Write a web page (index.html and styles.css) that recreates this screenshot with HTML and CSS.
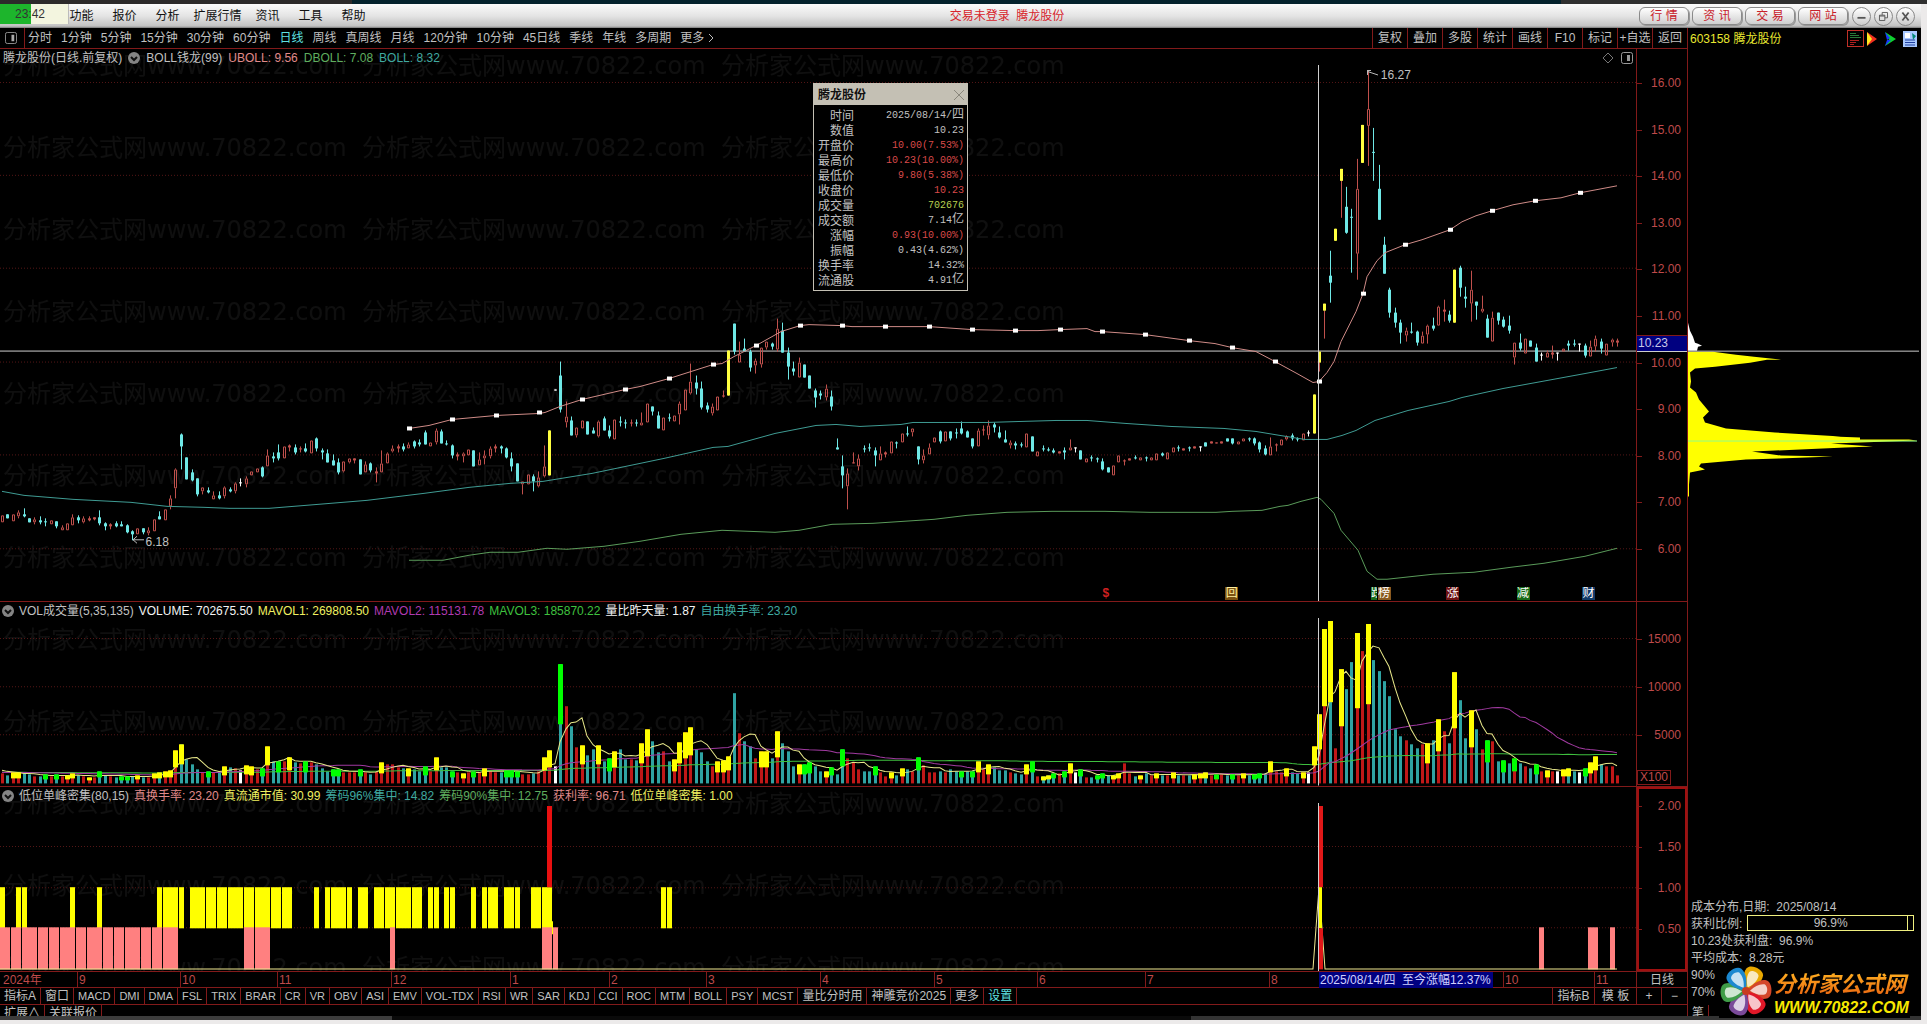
FILE: index.html
```html
<!DOCTYPE html>
<html lang="zh-CN">
<head>
<meta charset="utf-8">
<title>腾龙股份 日线</title>
<link rel="stylesheet" href="styles.css">
</head>
<body>
<div class="desk-strip"></div>
<div class="window">
  <header class="menubar">
    <div class="clock"><span>23:42</span></div>
    <nav class="menus">
      <button>功能</button><button>报价</button><button>分析</button><button class="wide">扩展行情</button><button>资讯</button><button>工具</button><button>帮助</button>
    </nav>
    <div class="status">交易未登录&nbsp; 腾龙股份</div>
    <div class="pills"><button>行 情</button><button>资 讯</button><button>交 易</button><button>网 站</button></div>
    <div class="winctl">
      <button aria-label="最小化"><svg viewBox="0 0 19 19"><path d="M5 11h9" stroke-width="2"/></svg></button>
      <button aria-label="还原"><svg viewBox="0 0 19 19"><path d="M8 8V5h6v6h-3M5 8h6v6H5zM5 9h6" stroke-width="1"/></svg></button>
      <button aria-label="关闭"><svg viewBox="0 0 19 19"><path d="M6 5l7 9M13 5l-7 9" stroke-width="2"/></svg></button>
    </div>
  </header>

  <div class="body">
    <main class="left">
      <div class="toolbar">
        <button class="dock" aria-label="侧栏"><svg viewBox="0 0 13 13"><rect x=".5" y=".5" width="12" height="12" rx="2" fill="none" stroke="#999"/><path d="M7 3h3v7H7z" fill="#aaa"/></svg></button>
        <div class="periods">
          <button>分时</button><button>1分钟</button><button>5分钟</button><button>15分钟</button><button>30分钟</button><button>60分钟</button><button class="on">日线</button><button>周线</button><button>真周线</button><button>月线</button><button>120分钟</button><button>10分钟</button><button>45日线</button><button>季线</button><button>年线</button><button>多周期</button><button class="more">更多<svg viewBox="0 0 6 10"><path d="M1 1l4 4-4 4" fill="none" stroke="#bbb"/></svg></button>
        </div>
        <div class="tools">
          <button>复权</button><button>叠加</button><button>多股</button><button>统计</button><button>画线</button><button>F10</button><button>标记</button><button>+自选</button><button>返回</button>
        </div>
      </div>

      <div class="charts">
        <svg class="watermark" aria-hidden="true"><defs><pattern id="wm" width="359" height="82" patternUnits="userSpaceOnUse"><text x="3" y="25">分析家公式网www.70822.com</text></pattern></defs><rect width="1077" height="100%" fill="url(#wm)"/></svg>

        <section class="panel price">
          <div class="plot">
            <div class="legend">
              <span>腾龙股份(日线.前复权)</span><button class="fold" aria-label="指标菜单"><svg viewBox="0 0 12 12"><circle cx="6" cy="6" r="6"/><path d="M3 5l3 3 3-3"/></svg></button><span>BOLL钱龙(99)</span><span class="pink">UBOLL: 9.56</span><span class="green">DBOLL: 7.08</span><span class="teal">BOLL: 8.32</span>
              <svg class="corner" viewBox="0 0 30 12"><path d="M5 1l5 5-5 5-5-5z" fill="none" stroke="#777"/><rect x="18.500" y=".5" width="11" height="11" rx="2" fill="none" stroke="#999"/><path d="M24 3h3v6h-3z" fill="#999"/></svg>
            </div>
            <svg id="price" class="canvas" viewBox="0 65 1636 537" preserveAspectRatio="none"></svg>
            <span class="mark high">16.27</span>
            <span class="mark low">6.18</span>
            <b class="pin dollar">$</b><b class="pin hui">回</b><b class="pin die">跌</b><b class="pin bang">榜</b><b class="pin zhang">涨</b><b class="pin jian">减</b><b class="pin cai">财</b>
            <div class="popup">
              <div class="popup-head"><b>腾龙股份</b><button aria-label="关闭"><svg viewBox="0 0 12 12"><path d="M1 1l10 10M11 1L1 11" stroke="#8a877c" fill="none"/></svg></button></div>
              <dl>
                <dt>时间</dt><dd>2025/08/14/<i>四</i></dd>
                <dt>数值</dt><dd>10.23</dd>
                <dt>开盘价</dt><dd class="up">10.00(7.53%)</dd>
                <dt>最高价</dt><dd class="up">10.23(10.00%)</dd>
                <dt>最低价</dt><dd class="up">9.80(5.38%)</dd>
                <dt>收盘价</dt><dd class="up">10.23</dd>
                <dt>成交量</dt><dd class="vol">702676</dd>
                <dt>成交额</dt><dd>7.14<i>亿</i></dd>
                <dt>涨幅</dt><dd class="up">0.93(10.00%)</dd>
                <dt>振幅</dt><dd>0.43(4.62%)</dd>
                <dt>换手率</dt><dd>14.32%</dd>
                <dt>流通股</dt><dd>4.91<i>亿</i></dd>
              </dl>
            </div>
          </div>
          <div class="axis"><span>16.00</span><span>15.00</span><span>14.00</span><span>13.00</span><span>12.00</span><span>11.00</span><span>10.00</span><span>9.00</span><span>8.00</span><span>7.00</span><span>6.00</span><em class="cursor">10.23</em></div>
        </section>

        <section class="panel volume">
          <div class="plot">
            <div class="legend tight">
              <button class="fold" aria-label="指标菜单"><svg viewBox="0 0 12 12"><circle cx="6" cy="6" r="6"/><path d="M3 5l3 3 3-3"/></svg></button><span>VOL成交量(5,35,135)</span><span class="white">VOLUME: 702675.50</span><span class="yellow">MAVOL1: 269808.50</span><span class="purple">MAVOL2: 115131.78</span><span class="lime">MAVOL3: 185870.22</span><span class="white">量比昨天量: 1.87</span><span class="teal">自由换手率: 23.20</span>
            </div>
            <svg id="volume" class="canvas" viewBox="0 619 1636 167" preserveAspectRatio="none"></svg>
          </div>
          <div class="axis"><span>15000</span><span>10000</span><span>5000</span><em class="unit">X100</em></div>
        </section>

        <section class="panel signal">
          <div class="plot">
            <div class="legend tight">
              <button class="fold" aria-label="指标菜单"><svg viewBox="0 0 12 12"><circle cx="6" cy="6" r="6"/><path d="M3 5l3 3 3-3"/></svg></button><span>低位单峰密集(80,15)</span><span class="pink">真换手率: 23.20</span><span class="yellow">真流通市值: 30.99</span><span class="teal">筹码96%集中: 14.82</span><span class="green">筹码90%集中: 12.75</span><span class="pink">获利率: 96.71</span><span class="yellow">低位单峰密集: 1.00</span>
            </div>
            <svg id="signal" class="canvas" viewBox="0 803 1636 168" preserveAspectRatio="none"></svg>
          </div>
          <div class="axis"><span>2.00</span><span>1.50</span><span>1.00</span><span>0.50</span></div>
        </section>
      </div>

      <div class="dates">
        <div class="months"><span>2024年</span><span>9</span><span>10</span><span>11</span><span>12</span><span>1</span><span>2</span><span>3</span><span>4</span><span>5</span><span>6</span><span>7</span><span>8</span><span class="now">2025/08/14/四&nbsp; 至今涨幅12.37%</span><span class="gap"></span><span>10</span><span>11</span></div>
        <div class="period">日线</div>
      </div>

      <div class="tabs">
        <button class="cn">指标A</button><button class="cn">窗口</button><button>MACD</button><button>DMI</button><button>DMA</button><button>FSL</button><button>TRIX</button><button>BRAR</button><button>CR</button><button>VR</button><button>OBV</button><button>ASI</button><button>EMV</button><button>VOL-TDX</button><button>RSI</button><button>WR</button><button>SAR</button><button>KDJ</button><button>CCI</button><button>ROC</button><button>MTM</button><button>BOLL</button><button>PSY</button><button>MCST</button><button class="cn">量比分时用</button><button class="cn">神雕竞价2025</button><button class="cn">更多</button><button class="cn on">设置</button>
        <div class="tabs-end"><button>指标B</button><button>模 板</button><button class="zoom">+</button><button class="zoom">−</button></div>
      </div>
      <div class="extra"><button>扩展∧</button><button>关联报价</button></div>
    </main>

    <aside class="side">
      <div class="stock"><span>603158 腾龙股份</span>
        <svg viewBox="0 0 72 18"><rect x=".5" y=".5" width="16" height="16" fill="none" stroke="#c03028"/><path d="M3 3.500h6M3 5.500h9M3 7.500h11" stroke="#287838"/><path d="M3 10.500h9M3 12.500h6M3 14.500h4" stroke="#b02020"/><path d="M20 2l10 7-10 7 3-7z" fill="#f03020"/><path d="M20 2l5 7-5 7z" fill="#ffe820"/><path d="M38 2l11 7-11 7 4-7z" fill="#10d030"/><path d="M38 2l5 6-3 2z" fill="#1838ff"/><path d="M40 10l4 0-6 6z" fill="#1838ff"/><rect x="56" y="1" width="14" height="16" fill="#a8c8ff"/><path d="M58 3h5v5h-5z" fill="#fff"/><path d="M65 3l4 3-3 4z" fill="#087"/><path d="M58 10h10M58 12.500h10M58 15h10" stroke="#2040a0"/></svg>
      </div>
      <svg class="chips" viewBox="1688 49 233 849" preserveAspectRatio="none">
        <path fill="#fff" d="M1688 323L1690 331L1693 337L1695 343L1698 344L1702 346L1698 347L1697 351H1688z"/>
        <path fill="#ff0" d="M1688 352H1713L1736 355L1754 357L1781 360H1767L1750 363L1715 367L1695 369L1690 373L1691 382L1690 388L1696 393L1699 400L1709 412L1703 418L1705 423L1726 429L1775 433L1841 437H1833L1860 438V440H1909L1917 441L1860 443L1831 444L1873 447L1845 448L1775 451L1752 452L1781 456L1833 457L1779 459L1746 460L1701 464L1699 467L1705 470L1690 473L1689 485V497H1688z"/>
        <path d="M1688 441.500H1917" stroke="#8dff8d"/>
        <path d="M1688 351.500H1919" stroke="#ccc"/>
      </svg>
      <div class="info">
        <p>成本分布,日期: &nbsp;2025/08/14</p>
        <p class="ratio">获利比例: <span>96.9%</span></p>
        <p>10.23处获利盘: &nbsp;96.9%</p>
        <p>平均成本: &nbsp;8.28元</p>
        <p>90%</p>
        <p>70%</p>
        <div class="brand">
          <svg viewBox="-27 -27 54 54">
            <defs>
              <path id="petal" d="M0 0C-6 -7 -11 -14 -9 -21C-7 -27 7 -27 9 -21C11 -14 6 -7 0 0z"/>
              <path id="inner" d="M0 -4C-4 -9 -6 -14 -5 -19C-3 -22 3 -22 5 -19C6 -14 4 -9 0 -4z" fill="#fff" opacity=".75"/>
            </defs>
            <g transform="rotate(25)"><use href="#petal" fill="#e8a800"/><use href="#inner"/></g>
            <g transform="rotate(85)"><use href="#petal" fill="#d4472a"/><use href="#inner"/></g>
            <g transform="rotate(145)"><use href="#petal" fill="#e01828"/><use href="#inner"/></g>
            <g transform="rotate(205)"><use href="#petal" fill="#7a4a9a"/><use href="#inner"/></g>
            <g transform="rotate(265)"><use href="#petal" fill="#3f9c48"/><use href="#inner"/></g>
            <g transform="rotate(325)"><use href="#petal" fill="#1c88d0"/><use href="#inner"/></g>
            <circle r="4" fill="#c83c20"/>
          </svg>
          <div><strong>分析家公式网</strong><a href="#home">WWW.70822.COM</a></div>
        </div>
      </div>
      <div class="extra"><button>笔</button></div>
    </aside>
  </div>
  <div class="scroll"></div>
</div>
<script src="chart.js"></script>
</body>
</html>
```

FILE: styles.css
```css
* { box-sizing: border-box; }
html, body { margin: 0; height: 100%; }
body {
  display: flex; flex-direction: column;
  background: #eceaea; color: #c0c0c0;
  font: 12px/16px "Liberation Sans", "Noto Sans CJK SC", sans-serif;
  overflow: hidden;
}
button { margin: 0; padding: 0; border: 0; background: none; color: inherit; font: inherit; white-space: nowrap; }
svg { display: block; }
p, dl, dd, dt { margin: 0; }

.desk-strip { height: 4px; background: linear-gradient(90deg, #2c2a2a 352px, #04222c 352px, #04222c 81%, #303030 81%); }
.window { flex: 1; min-height: 0; margin: 0 6px 4px 0; display: flex; flex-direction: column; background: #000; }

/* menu bar */
.menubar { display: flex; align-items: center; height: 24px; background: linear-gradient(#fbfbfb, #e4e4e4 50%, #c2c2c2 92%, #777); color: #111; }
.clock { width: 69px; height: 20px; align-self: flex-start; padding-left: 15px; line-height: 20px; background: linear-gradient(90deg, #1db52c 31px, #f3f5df 31px); color: #333; border-right: 1px solid #bbb; }
.menus { display: flex; margin-left: -9px; }
.menus button { width: 43px; }
.menus .wide { width: 57px; }
.status { margin: 0 auto; color: #d8242c; }
.pills { display: flex; gap: 3px; }
.pills button { width: 50px; height: 18px; border: 1px solid #8a8a8a; border-radius: 6px; background: linear-gradient(#fff, #cfcfcf); box-shadow: 1px 1px 0 #999; color: #c8202a; line-height: 15px; }
.winctl { display: flex; gap: 3px; margin: 0 6px 0 4px; }
.winctl button { width: 19px; height: 19px; border: 1px solid #888; border-radius: 50%; background: linear-gradient(#fff, #ccc); }
.winctl svg { width: 17px; height: 17px; fill: none; stroke: #555; }

.body { flex: 1; min-height: 0; display: flex; }
.left { flex: 1; min-width: 0; display: flex; flex-direction: column; border-right: 1px solid #821a1a; }

/* period toolbar */
.toolbar { display: flex; height: 21px; border-bottom: 1px solid #821a1a; line-height: 20px; }
.dock { width: 25px; padding-left: 5px; border-right: 1px solid #821a1a; }
.dock svg { width: 12px; height: 12px; }
.periods { display: flex; gap: 9px; margin-left: 3px; }
.on { color: #5fe0e0; }
.more { display: flex; align-items: center; gap: 4px; }
.more svg { width: 6px; height: 10px; }
.tools { display: flex; margin-left: auto; }
.tools button { width: 35px; border-left: 1px solid #821a1a; }

/* chart panels */
.charts { position: relative; flex: 923 1 0; min-height: 0; display: flex; flex-direction: column; }
.watermark { position: absolute; inset: 0; width: 100%; height: 100%; pointer-events: none; }
.watermark text { font: 24px "DejaVu Sans", "Noto Sans CJK SC", sans-serif; fill: #0f0f0f; }
.panel { position: relative; display: flex; min-height: 0; border-bottom: 1px solid #821a1a; }
.price { flex: 554 1 0; }
.volume { flex: 184 1 0; }
.signal { flex: 185 1 0; }
.plot { position: relative; flex: 1; min-width: 0; display: flex; flex-direction: column; border-right: 1px solid #821a1a; }
.legend { display: flex; align-items: center; gap: 6px; height: 16px; padding: 2px 3px 0 3px; white-space: nowrap; }
.tight { gap: 5px; padding-left: 2px; }
.fold svg { width: 12px; height: 12px; fill: #858585; }
.fold path { fill: none; stroke: #111; stroke-width: 2; }
.corner { width: 30px; height: 12px; margin-left: auto; }
.canvas { flex: 1; width: 100%; height: 0; min-height: 0; }
.pink { color: #e08a8a; }
.green { color: #5fae5f; }
.lime { color: #3fc03f; }
.teal { color: #3fa9a0; }
.yellow { color: #f0f060; }
.purple { color: #b03ab0; }
.white { color: #f4f4f4; }

.axis { position: relative; width: 50px; display: flex; flex-direction: column; justify-content: space-between; align-items: flex-end; padding-right: 6px; color: #bf4a4a; }
.axis span { position: relative; width: 44px; text-align: right; }
.axis span::before { content: ""; position: absolute; left: 0; top: 8px; width: 5px; height: 1px; background: #821a1a; }
.price .axis { padding-top: 26px; padding-bottom: 44px; }
.volume .axis { padding-top: 29px; padding-bottom: 0; justify-content: flex-start; gap: 32px; }
.signal .axis { border: 2px solid #a01010; padding: 9px 4px 32px 0; }
.axis em { font-style: normal; }
.cursor { position: absolute; left: 0; right: 0; height: 17px; top: 286px; background: #000080; color: #c8c8e8; border-top: 1px solid #821a1a; border-bottom: 1px solid #ccc; line-height: 15px; padding-left: 1px; }
.unit { position: absolute; left: 0; bottom: 1px; border: 1px solid #821a1a; padding: 0 2px; line-height: 13px; }

/* things that float on the price canvas */
.mark { position: absolute; }
.high { left: 84.4%; top: 18px; }
.low { left: 8.9%; bottom: 51px; }
.pin { position: absolute; bottom: 1px; width: 13px; height: 13px; color: #fff; font-size: 12px; font-weight: 400; line-height: 12px; text-align: center; overflow: hidden; }
.dollar { left: 67.2%; color: #d02020; font-weight: 700; }
.hui { left: 74.9%; background: #7a5010; color: #fff0a0; }
.die { left: 83.8%; width: 6px; background: #186a18; text-align: left; }
.bang { left: 84.2%; background: #8a5a20; }
.zhang { left: 88.4%; background: #6e1212; }
.jian { left: 92.7%; background: #186a18; }
.cai { left: 96.700%; background: #123a68; }

.popup { position: absolute; left: 49.700%; top: 34px; width: 155px; height: 208px; border: 1px solid #c4c0b4; background: #000; }
.popup-head { display: flex; justify-content: space-between; align-items: center; height: 21px; padding: 0 2px 0 4px; background: #c4c0b4; color: #111; }
.popup-head svg { width: 12px; height: 12px; }
.popup dl { display: grid; grid-template-columns: 36px 1fr; grid-auto-rows: 15px; padding: 3px 3px 0 4px; line-height: 16px; text-align: right; }
.popup dd { font: 10px/16px "Liberation Mono", "Noto Sans CJK SC", monospace; }
.popup i { font-size: 12px; font-style: normal; line-height: 12px; }
.popup .up { color: #d84a4a; }
.popup .vol { color: #b8d050; }

/* date axis and tabs */
.dates { display: flex; height: 16px; border-bottom: 1px solid #821a1a; color: #bf4a4a; }
.months { flex: 1; display: grid; grid-template-columns: 77fr 103fr 97fr 114fr 119fr 99fr 97fr 114fr 114fr 103fr 108fr 124fr 50fr 174fr 10fr 91fr 42fr; border-right: 1px solid #821a1a; line-height: 16px; white-space: nowrap; }
.months span { border-left: 1px solid #821a1a; padding-left: 1px; min-width: 0; }
.months span:first-child { border: 0; padding-left: 3px; }
.months .now { background: #000080; color: #d0d0ff; border: 0; }
.months .gap { border: 0; }
.period { width: 50px; text-align: center; line-height: 16px; color: #c0c0c0; }
.tabs { display: flex; height: 17px; border-bottom: 1px solid #821a1a; font-size: 11px; line-height: 16px; }
.tabs button { padding: 0 4px; border-right: 1px solid #821a1a; }
.tabs .cn, .tabs-end { font-size: 12px; }
.tabs-end { display: flex; margin-left: auto; border-left: 1px solid #821a1a; }
.tabs-end button { width: 42px; padding: 0; }
.tabs-end .zoom { width: 25px; }
.tabs-end .zoom:last-child { border: 0; }
.extra { display: flex; height: 11px; overflow: hidden; line-height: 16px; }
.extra button { height: 16px; padding: 0 4px; border-right: 1px solid #821a1a; }

/* side column */
.side { width: 233px; display: flex; flex-direction: column; }
.stock { display: flex; align-items: center; justify-content: space-between; height: 21px; padding: 0 2px; color: #e8e830; }
.stock svg { width: 72px; height: 18px; }
.chips { flex: 1; min-height: 0; width: 100%; height: 0; }
.info { position: relative; padding: 1px 7px 5px 3px; line-height: 18px; }
.info p { height: 17px; white-space: nowrap; }
.ratio { display: flex; gap: 5px; }
.ratio span { flex: 1; height: 16px; line-height: 15px; border: 1px solid #f0f080; text-align: center; background: linear-gradient(#f0f080, #f0f080) right 5px top / 1px 100% no-repeat; }
.brand { position: absolute; right: 11px; bottom: -13px; display: flex; align-items: center; gap: 1px; height: 54px; background: #000; }
.brand svg { width: 54px; height: 54px; }
.brand div { display: flex; flex-direction: column; width: 136px; margin-top: 8px; }
.brand strong { font-size: 22px; line-height: 26px; font-style: italic; white-space: nowrap; background: linear-gradient(#ffb020, #e86010); background-clip: text; -webkit-background-clip: text; color: transparent; }
.brand a { font-size: 16px; line-height: 20px; font-weight: 700; font-style: italic; color: #f8e800; text-decoration: none; }
.scroll { height: 4px; background: linear-gradient(90deg, #3c3c3c 392px, #0a0a0a 392px, #0a0a0a 62%, #333 62%); }
```

FILE: chart.js
```js
// Candles: colour, body top, body bottom, then optional wick top and wick bottom.
const candles = `
r516,523 c515,519 r515,522 r513,517,511,519 c515,517,509,518 c519,523 r520,523,518,525 c521,523,517,525 c522,523,519,527 r521,525
c522,527,522,529 r528,531,526,531 r524,531 r518,526,515,526 c518,521,516,524 r519,523,517,524 r519,521,517,522 r518,520,518,521 c518,524,511,526 c524,527,523,531
r525,527,524,530 c524,527,522,528 c525,527,522,527 c526,533,525,534 c532,535,531,541 r529,535 c529,533,529,535 r531,534,528,536 r520,532 c517,520,512,520
r510,521 r499,507,496,510 r470,489,469,499 c435,447,434,470 c458,480 c473,481,470,482 c479,495,479,497 r488,492,488,495 c491,493,488,494 r496,500,492,500
c496,499,492,500 r488,497,487,499 c490,492,488,493 r484,492,483,494 w483,484,479,487 r479,485,477,488 r472,476 r469,473 c468,477,467,478 r456,467,450,467
c457,459,453,463 c453,459,445,461 r447,459 r446,448,445,452 c448,453,445,455 r449,450,447,453 c449,452,444,453 r441,454 c439,449,438,452 c451,453,449,460
c454,463,450,463 c461,466,455,466 c463,473,459,475 r462,472,462,473 r459,463,459,464 r459,461,459,464 c460,475 r465,473,462,473 c464,471,463,473 r472,474,468,483
r464,473,451,473 r454,464,453,464 r449,452,446,453 r447,449,445,453 c447,450,444,452 r445,449,443,449 c442,447,441,449 c443,445,440,447 c433,445,431,445 r443,447
r431,443,429,445 c432,444,430,444 c444,445,441,446 c446,456,445,459 r455,457,453,461 r454,457,453,463 r450,456 c451,467 r460,466,453,466 r456,459,451,465
r449,457,447,459 r447,449,445,453 c447,449,446,454 c449,458,448,459 c459,467,453,472 c464,482 r482,485,482,495 r475,485 c477,482,475,492 r478,487,472,488
r467,477,446,478 y431,476 w390,391 c376,410,362,413 r417,423,402,428 c421,436,417,436 r428,436,428,438 r421,429 c422,435 c431,434,428,434
r422,437,421,438 c419,431,417,431 c431,437,426,439 r420,440 c422,423,417,427 c423,424,420,429 r423,424,420,427 c423,424,420,427 r423,426,413,426 r404,423
c407,412,407,416 c416,429,412,429 r418,431 c418,419,414,422 r416,422 r404,415,402,425 r390,411 r382,394,364,395 c383,389,376,395 c389,408,382,410
c406,410,403,413 r407,414,404,416 r397,411 r396,397,391,398 y351,396 c324,352,324,355 r355,363,342,363 c349,352,339,352 c352,368,350,372 r361,366,359,374
r348,365,348,368 r342,348,342,350 c344,347,343,350 r329,350,319,352 c331,353,323,353 c353,367,348,380 c369,372,362,376 r363,378,358,378 c365,378 c376,389
c391,398,389,408 c394,396,391,400 r389,398,385,401 c397,407,391,411 c448,450,439,450 c467,476,456,489 r474,487,469,510 r463,464,453,464 r459,467,455,471 c449,450,446,453
c448,449,444,452 c451,456,448,467 r454,461,447,461 r453,455,452,458 r442,454 c443,444,442,449 r434,443 c434,435,427,437 r429,433,429,437 c447,460,447,465
r456,461,450,464 r448,455,444,455 r438,443 c432,442,431,444 r432,442 c432,439,432,441 c433,434,429,439 c429,434,422,435 c432,438,431,438 c439,447,439,449
r431,447,429,447 r430,431,426,436 r426,436,421,440 c425,428,423,433 c433,438,427,439 c440,443,431,443 r443,446,441,449 c444,446,442,450 c445,446,443,448 r434,448
c437,452 r452,457 c449,450,446,452 c450,451,448,452 c451,453,449,454 r452,454 c451,453,448,460 r448,451,440,451 w448,449,448,453 c451,460
r459,463 c458,459,456,462 c459,460,458,463 c462,470,459,471 c468,473 r466,476 r456,463 r461,462,460,466 r459,461 c458,459,456,460
r458,461 c458,459,457,462 r458,461 r454,461 c454,456,453,457 r453,460 r448,453 c448,449,446,452 r449,451 c448,449,447,452
r447,449 w447,448,447,452 c443,447 r442,444 r443,444 r442,444 c439,442 c439,444,439,445 r442,445 r439,442
c439,440,438,442 c439,444,438,446 c443,450,442,453 c449,455,446,456 r447,456,438,456 r445,446,444,452 r440,446 r437,440,436,441 c436,439,434,441 c439,440,438,442
r434,441 w433,434,431,437 y395,434 Y352,363,352,372 Y304,311,304,339 c276,283,251,303 y229,241 Y169,181,169,218 c207,233,187,234 c217,218,209,273
r189,254,159,280 y125,163 r109,126,70,166 c152,153,128,181 c189,220,165,220 c245,274,237,274 c290,313,288,318 c313,323,308,328 c323,333,320,344 r331,336,328,342
c332,333,323,334 c332,343,331,346 r336,344,332,344 r326,335,325,344 c326,329,318,331 r307,326,306,326 r310,312,300,322 c315,321,311,323 y270,323 c268,288,266,297
c297,299,287,308 r290,304,271,322 c302,306,302,320 r309,312,296,313 c319,338,315,338 r318,342,312,342 c313,321,313,325 c320,327,317,328 c326,331,316,334 r343,358,343,365
c343,349,334,351 r339,354 c341,347 c348,362,344,362 w355,356,353,361 r353,358,351,358 r353,355,346,359 w353,354,353,361 r349,352 c344,346,341,351
c344,345,340,347 w344,345,344,352 c346,356,344,358 r347,357,341,357 r339,347,336,352 c342,349,339,354 r344,356 r340,343,339,347 r341,343,339,347
`.trim().split(/\s+/).map(s => [s[0], ...s.slice(1).split(',').map(Number)]);

// Volume bar heights; y / g put a highlight on the upper half, w is a plain white bar.
const volumes = `
10 8 11y 11y 10 9 7 7 9g 7 9g 7 8y 10y 8 7 6y 6 12g 8
7 6 7g 7g 7 8y 6 6 10y 11y 12y 13y 33y 39y 24 19 14 11 12g 11
11 17y 16 15 13w 18y 17y 14 15g 37y 22 22g 22 26y 21 20 22g 21 19 15
12 14g 14g 11 11 11 14g 11 9 12 21y 19 19 16 15 15y 14 12 17g 12
26y 16 16 12g 11 10y 11 12g 11 15y 12 11 11 13g 13g 12g 9 9 10 12
26y 33y 17w 119g 77 57 36 38y 28 34 38y 22 25g 32y 34 24 24 23 40y 54y
42 31 32 22 24y 41y 51y 56y 34 31 22 17 22y 23y 27y 90 50 42 37 25
32y 32y 25 52y 40 32 17 19y 19g 21g 17 12 12y 16g 9 34g 25 21 14 12
12 17g 11 7 11y 8 15y 14 12 26g 18 11 11 12 11 14 12 12g 12 12g
22y 14 19y 16 13 13 11 10 9 19y 22g 7 7y 8y 10g 10 12g 20y 11w 14g
6 6 8g 10g 8 8y 10y 20 10 7 8y 10 8 10y 8 8 11y 8 8 8
9y 10y 11y 8 9g 9 8 9g 8 10y 8 9g 10g 10 22y 12 11 15y 11 10
11y 11w 37y 69y 154y 162y 35 114y 94 121 150y 132 159y 123 112 102 87 54 47 43
39 35 39 40y 43 64y 52 40 111y 83 45 73y 54 34 43g 42 22 23g 20 25g
20 17 15 19g 12 13y 12 12w 14y 15y 12 11w 15g 21y 27y 19 17 17 8
`.trim().split(/\s+/).map(s => [parseInt(s, 10), s.replace(/\d+/, '')]);

const x = i => Math.floor(2.4 + 5.42 * i);
const rect = (l, t, w, h, f) => `<rect x="${l}" y="${t}" width="${w}" height="${h}" fill="${f}"/>`;
const line = (d, c, extra = '') => `<path d="${d}" fill="none" stroke="${c}" ${extra}/>`;
const grid = ys => ys.map(y => line(`M0 ${y}.5H1636`, '#541616', 'stroke-dasharray="1 2"')).join('');
const cursor = (a, b) => line(`M1318.5 ${a}V${b}`, '#d0d0d0');
const poly = s => 'M' + s.trim().split(/\s+/).join('L');

const RED = '#c0504c', CYAN = '#6fe8e6', YEL = '#ffff40';

const upper = `409,429 429,426 452,420 496,416 539,414 545,413 560,407 582,400 625,390 640,387 669,379 713,365 722,364 734,357 756,346 781,332 800,326 809,325 842,326 852,327 885,327 929,327 972,330 1015,331 1038,331 1060,330 1087,329 1095,332 1102,332 1145,335 1189,341 1215,344 1232,348 1256,352 1275,362 1297,374 1313,383 1319,382 1327,373 1334,362 1341,342 1356,312 1363,294 1367,277 1377,261 1385,253 1405,245 1422,240 1450,230 1462,222 1476,216 1492,211 1513,205 1535,201 1561,198 1580,193 1617,186`;
const middle = `2,492 24,496 73,500 131,503 167,507 204,508 229,509 269,509 306,506 367,501 424,494 469,488 510,484 543,482 592,474 640,464 664,459 713,448 728,447 775,434 816,426 836,425 860,427 901,425 913,423 987,423 1020,422 1056,421 1087,421 1126,424 1171,427 1224,429 1256,432 1280,436 1305,440 1327,440 1342,436 1356,431 1375,421 1408,411 1449,402 1462,398 1503,389 1536,383 1585,374 1617,368`;
const lower = `409,561 443,561 469,556 490,553 518,553 547,549 567,550 604,547 640,542 681,535 722,531 775,533 799,531 832,525 873,524 934,520 967,516 1007,513 1052,512 1105,512 1150,513 1216,513 1232,512 1262,511 1280,507 1288,506 1301,502 1317,498 1321,500 1334,514 1341,531 1358,551 1367,572 1377,580 1387,580 1433,575 1474,573 1511,568 1544,564 1585,557 1617,549`;
const dots = `409,429 452,420 496,416 539,413 582,400 625,390 669,379 713,365 756,346 800,326 842,326 885,327 929,327 972,330 1015,331 1060,330 1102,332 1145,335 1189,341 1232,348 1275,362 1319,382 1363,294 1405,245 1450,230 1492,211 1535,201 1580,193`;

// price panel
let out = grid([82, 175, 268, 362, 455, 549]) + line('M0 351.5H1636', '#d0d0d0');
candles.forEach(([c, top, bottom, high = top, low = bottom], i) => {
  const l = x(i);
  if (c === 'w') {
    out += rect(l, high, 1, Math.max(low - high, 1), '#fff') + rect(l - 1, top, 3, 1, '#fff');
    return;
  }
  const wick = c === 'c' ? CYAN : c === 'y' ? YEL : RED;
  if (c === 'r' && bottom - top > 2) {
    if (high < top) out += rect(l, high, 1, top - high, wick);
    if (low > bottom) out += rect(l, bottom, 1, low - bottom, wick);
    out += `<path d="M${l - .5} ${top + .5}h2v${bottom - top - 1}h-2z" fill="none" stroke="${RED}"/>`;
    return;
  }
  out += rect(l, high, 1, low - high, wick);
  out += rect(l - 1, top, 3, Math.max(bottom - top, 1), c === 'r' ? RED : c === 'c' ? CYAN : YEL);
});
out += line(poly(upper), '#d08c88') + line(poly(middle), '#3f9c94') + line(poly(lower), '#5a9c5a');
dots.split(' ').forEach(p => {
  const [px, py] = p.split(',').map(Number);
  out += rect(px - 2, py - 2, 5, 4, '#fff');
});
out += cursor(65, 602) + line('M1367.5 71.500L1378 75M1367.500 71V75M1367 70.500H1371M133 540.500H144M133 540.500L137 537M133 540.500L137 544', '#bbb');
document.getElementById('price').innerHTML = out;

// volume panel
const average = (n, pad) => {
  let d = '';
  volumes.forEach((v, i) => {
    let sum = 0;
    for (let k = 0; k < n; k++) sum += i - k < 0 ? pad : volumes[i - k][0];
    d += (i ? 'L' : 'M') + x(i) + ' ' + (784 - sum / n).toFixed(1);
  });
  return d;
};
out = grid([639, 687, 735]);
volumes.forEach(([h, mark], i) => {
  const l = x(i), c = (candles[i] || ['r'])[0];
  out += rect(l - 1, 784 - h, 3, h, mark === 'w' ? '#fff' : c === 'c' ? '#2fa3a3' : '#c01818');
});
out += line(average(135, 11), '#3fc03f') + line(average(35, 11), '#a03aa0') + line(average(5, 14), '#e8e88a');
volumes.forEach(([h, mark], i) => {
  if (mark === 'y' || mark === 'g') out += rect(x(i) - 2, 784 - h, 5, Math.ceil(h / 2), mark === 'y' ? '#ff0' : '#0f0');
});
out += cursor(619, 786);
document.getElementById('volume').innerHTML = out;

// signal panel
const span = (a, b = a) => Array.from({ length: b - a + 1 }, (_, k) => a + k);
const yellow = [0, 3, 4, 13, 18, ...span(29, 33), ...span(35, 53), 58, ...span(60, 64), 66, 67, ...span(69, 77), 79, 80, 82, 83, 87, ...span(89, 91), ...span(93, 95), ...span(98, 101), 122, 123];
const pink = [...span(0, 32), ...span(45, 49), 72, 100, 101, 102, 284, 293, 294, 297];
out = grid([846, 887, 927]);
out += yellow.map(i => rect(x(i) - 2, 887, 5, 41, '#ff0')).join('');
out += pink.map(i => rect(x(i) - 2, 927, 5, 42, '#ff8080')).join('');
out += rect(x(101) - 2, 806, 5, 81, '#e81010');
out += line('M552.5 921V934', '#ff0') + line('M0 968.5H1313L1319 887L1325 968.5H1617', '#f0e890');
out += cursor(803, 971);
out += rect(1319, 806, 4, 81, '#e01818') + rect(1319, 887, 3, 41, '#ff0') + rect(1319, 928, 4, 41, '#e01818');
document.getElementById('signal').innerHTML = out;
```
